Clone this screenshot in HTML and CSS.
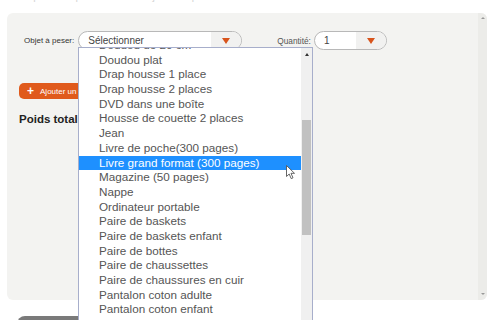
FILE: index.html
```html
<!DOCTYPE html>
<html lang="fr">
  <head>
    <meta charset="UTF-8" />
    <meta name="viewport" content="width=device-width, initial-scale=1.0" />
    <title>Peser un objet</title>
    <link rel="stylesheet" href="styles.css">
  </head>
  <body>
    <p class="page-title">Comparez le poids de vos objets du quotidien</p>

    <div class="panel">
      <div class="panel-body">
        <div class="form-row">
          <label class="field-label">Objet à peser:</label>
          <div class="fake-select item-select">
            <span class="value">Sélectionner</span>
            <span class="arrow"></span>
          </div>
          <label class="field-label qty-label">Quantité:</label>
          <div class="fake-select qty-select">
            <span class="value">1</span>
            <span class="arrow"></span>
          </div>
        </div>

        <button class="add-btn"><span class="plus">+</span>Ajouter un objet</button>

        <h3 class="total">Poids total</h3>
      </div>
      <div class="panel-scroll">
        <span class="tri-up"></span>
        <span class="tri-down"></span>
      </div>
    </div>

    <button class="gray-btn">Réinitialiser</button>

    <div class="dropdown">
      <ul class="options">
        <li>Doudou de 20 cm</li>
        <li>Doudou plat</li>
        <li>Drap housse 1 place</li>
        <li>Drap housse 2 places</li>
        <li>DVD dans une boîte</li>
        <li>Housse de couette 2 places</li>
        <li>Jean</li>
        <li>Livre de poche(300 pages)</li>
        <li class="selected">Livre grand format (300 pages)</li>
        <li>Magazine (50 pages)</li>
        <li>Nappe</li>
        <li>Ordinateur portable</li>
        <li>Paire de baskets</li>
        <li>Paire de baskets enfant</li>
        <li>Paire de bottes</li>
        <li>Paire de chaussettes</li>
        <li>Paire de chaussures en cuir</li>
        <li>Pantalon coton adulte</li>
        <li>Pantalon coton enfant</li>
        <li>Pantalon en toile</li>
      </ul>
      <div class="list-scroll">
        <span class="list-up"></span>
        <span class="thumb"></span>
      </div>
    </div>

    <svg class="cursor" width="10" height="15" viewBox="0 0 10 15">
      <path d="M0.5 0.5 L0.5 11.5 L3.2 9 L5.2 13.6 L7 12.8 L5 8.3 L8.5 8.3 Z" fill="#fff" stroke="#555" stroke-width="0.9" stroke-linejoin="round" />
    </svg>
  </body>
</html>
```

FILE: styles.css
```css
body {
  margin: 0;
  overflow: hidden;
  background: #fff;
  font-family: "Liberation Sans", Arial, sans-serif;
}

.page-title {
  margin: -10px 0 0;
  height: 23px;
  line-height: 12px;
  padding-left: 10px;
  font-size: 11px;
  color: #d6d6d6;
  overflow: hidden;
}

.panel {
  display: flex;
  height: 287px;
  margin: 0 3px 0 7px;
  background: #f3f3f1;
  border-radius: 6px;
  overflow: hidden;
}

.panel-body {
  flex: 1;
  padding: 18px 12px 0;
}

.panel-scroll {
  width: 9px;
  background: #ecece9;
  display: flex;
  flex-direction: column;
  justify-content: space-between;
  align-items: center;
  padding: 4px 0 5px;
  box-sizing: border-box;
}

.tri-up,
.tri-down {
  width: 0;
  height: 0;
  border-left: 2px solid transparent;
  border-right: 2px solid transparent;
}

.tri-up {
  border-bottom: 2px solid #999;
}

.tri-down {
  border-top: 2px solid #999;
}

.form-row {
  display: flex;
  align-items: center;
  height: 19px;
  padding-left: 5px;
}

.field-label {
  font-size: 8px;
  color: #333;
  margin-right: 4px;
}

.qty-label {
  margin-left: 35px;
  margin-right: 3px;
  font-size: 8.3px;
  color: #555;
}

.fake-select {
  display: flex;
  height: 19px;
  box-sizing: border-box;
  border: 1px solid #b8b8b8;
  border-radius: 10px;
  background: #fff;
  overflow: hidden;
}

.item-select {
  width: 164px;
}

.qty-select {
  width: 73px;
}

.fake-select .value {
  flex: 1;
  padding-left: 9px;
  font-size: 10px;
  line-height: 17px;
  color: #444;
}

.fake-select .arrow {
  width: 30px;
  background: #f1f1f0;
  display: flex;
  align-items: center;
  justify-content: center;
}

.fake-select .arrow::after {
  content: "";
  width: 0;
  height: 0;
  border-left: 4.5px solid transparent;
  border-right: 4.5px solid transparent;
  border-top: 6px solid #d8541c;
}

.add-btn {
  display: flex;
  align-items: center;
  height: 16px;
  margin-top: 33px;
  padding: 0 8px;
  border: none;
  border-radius: 5px;
  background: #e05a1c;
  color: #fff;
  font-family: "Liberation Sans", Arial, sans-serif;
  font-size: 8px;
}

.add-btn .plus {
  font-size: 12px;
  font-weight: bold;
  margin-right: 6px;
}

.total {
  margin: 14px 0 0;
  font-size: 11.5px;
  font-weight: bold;
  color: #222;
}

.gray-btn {
  display: block;
  width: 100px;
  height: 24px;
  margin: 16px 0 0 17px;
  border: none;
  border-radius: 8px;
  background: #7a7a7a;
  color: #fff;
}

.dropdown {
  position: absolute;
  left: 78px;
  top: 47px;
  width: 235px;
  height: 290px;
  display: flex;
  box-sizing: border-box;
  border: 1px solid #a7aecb;
  background: #fff;
  overflow: hidden;
}

.options {
  flex: 1;
  list-style: none;
  margin: -10px 0 0;
  padding: 0;
}

.options li {
  height: 14.7px;
  line-height: 14.7px;
  padding-left: 20px;
  font-size: 11.7px;
  color: #555;
  white-space: nowrap;
}

.options li.selected {
  background: #1e90ff;
  color: #fff;
}

.list-scroll {
  width: 11px;
  background: #f0f0f0;
  display: flex;
  flex-direction: column;
  align-items: center;
}

.list-up {
  margin-top: 5px;
  width: 0;
  height: 0;
  border-left: 2.5px solid transparent;
  border-right: 2.5px solid transparent;
  border-bottom: 3px solid #333;
}

.thumb {
  width: 9px;
  height: 115px;
  margin-top: 64px;
  background: #c1c1c1;
}

.cursor {
  position: absolute;
  left: 286px;
  top: 165px;
}
```
